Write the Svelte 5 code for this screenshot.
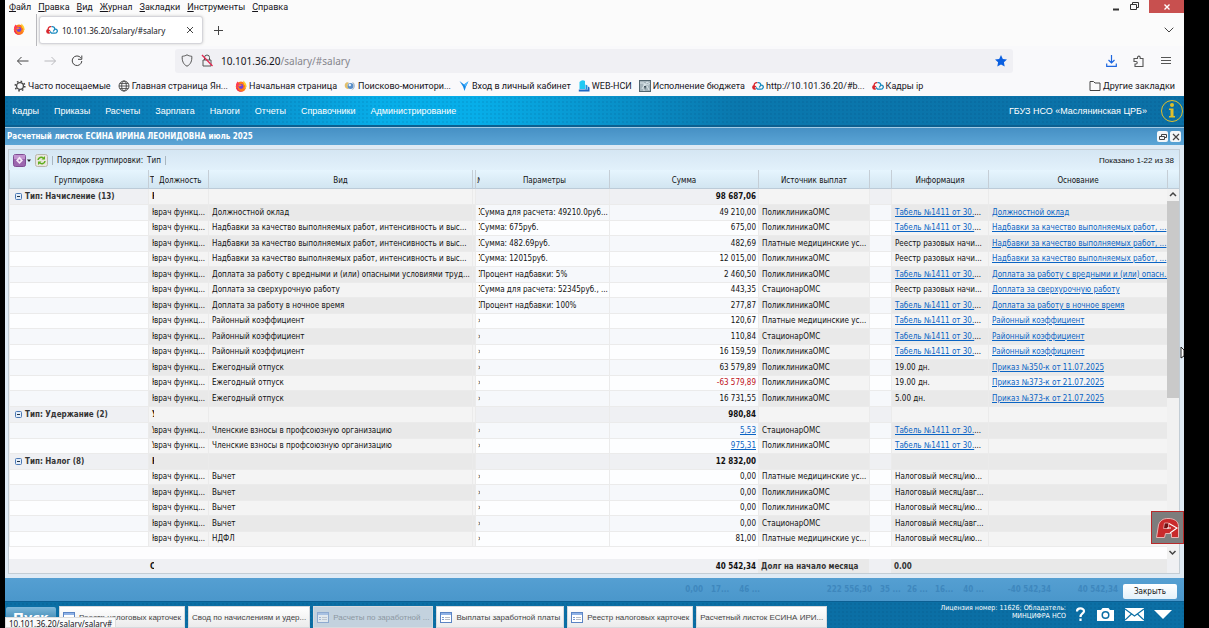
<script>
  const browserMenu = ['Файл', 'Правка', 'Вид', 'Журнал', 'Закладки', 'Инструменты', 'Справка'];
  const bookmarks = [
    ['gear', 'Часто посещаемые'],
    ['globe', 'Главная страница Ян...'],
    ['fox', 'Начальная страница'],
    ['swirl', 'Поисково-монитори...'],
    ['bird', 'Вход в личный кабинет'],
    ['stack', 'WEB-НСИ'],
    ['budget', 'Исполнение бюджета'],
    ['cloud', 'http://10.101.36.20/#b...'],
    ['cloud', 'Кадры ip']
  ];
  const appMenu = ['Кадры', 'Приказы', 'Расчеты', 'Зарплата', 'Налоги', 'Отчеты', 'Справочники', 'Администрирование'];

  const OMS = 'ПоликлиникаОМС';
  const ST = 'СтационарОМС';
  const PAID = 'Платные медицинские ус...';
  const TAB = '*Табель №1411 от 30....';
  const REG = 'Реестр разовых начи...';
  const QUALITY = 'Надбавки за качество выполняемых работ, интенсивность и выс...';
  const QLINK = 'Надбавки за качество выполняемых работ, ...';
  const row = (mark, kind, mark2, params, sum, source, info, reason = '') => ({ mark, kind, mark2, params, sum, source, info, reason });
  const group = (title, mark, sum) => ({ title, mark, sum });
  const rows = [
    group('Тип: Начисление (13)', 'Н', '98 687,06'),
    row('Н', 'Должностной оклад', '1', 'Сумма для расчета: 49210.0руб...', '49 210,00', OMS, TAB, 'Должностной оклад'),
    row('Н', QUALITY, '1', 'Сумма: 675руб.', '675,00', OMS, TAB, QLINK),
    row('Н', QUALITY, '1', 'Сумма: 482.69руб.', '482,69', PAID, REG, QLINK),
    row('Н', QUALITY, '1', 'Сумма: 12015руб.', '12 015,00', OMS, REG, QLINK),
    row('Н', 'Доплата за работу с вредными и (или) опасными условиями труд...', '1', 'Процент надбавки: 5%', '2 460,50', OMS, TAB, 'Доплата за работу с вредными и (или) опасн...'),
    row('Н', 'Доплата за сверхурочную работу', '1', 'Сумма для расчета: 52345руб., ...', '443,35', ST, REG, 'Доплата за сверхурочную работу'),
    row('Н', 'Доплата за работу в ночное время', '1', 'Процент надбавки: 100%', '277,87', OMS, TAB, 'Доплата за работу в ночное время'),
    row('Н', 'Районный коэффициент', '›', '', '120,67', PAID, TAB, 'Районный коэффициент'),
    row('Н', 'Районный коэффициент', '›', '', '110,84', ST, TAB, 'Районный коэффициент'),
    row('Н', 'Районный коэффициент', '›', '', '16 159,59', OMS, TAB, 'Районный коэффициент'),
    row('Н', 'Ежегодный отпуск', '›', '', '63 579,89', OMS, '19.00 дн.', 'Приказ №350-к от 11.07.2025'),
    row('Н', 'Ежегодный отпуск', '›', '', '-63 579,89', OMS, '19.00 дн.', 'Приказ №373-к от 21.07.2025'),
    row('Н', 'Ежегодный отпуск', '›', '', '16 731,55', OMS, '5.00 дн.', 'Приказ №373-к от 21.07.2025'),
    group('Тип: Удержание (2)', 'У', '980,84'),
    row('У', 'Членские взносы в профсоюзную организацию', '›', '', '*5,53', ST, TAB),
    row('У', 'Членские взносы в профсоюзную организацию', '›', '', '*975,31', OMS, TAB),
    group('Тип: Налог (8)', 'Н', '12 832,00'),
    row('Н', 'Вычет', '›', '', '0,00', PAID, 'Налоговый месяц/ию...'),
    row('Н', 'Вычет', '›', '', '0,00', OMS, 'Налоговый месяц/авг...'),
    row('Н', 'Вычет', '›', '', '0,00', OMS, 'Налоговый месяц/ию...'),
    row('Н', 'Вычет', '›', '', '0,00', ST, 'Налоговый месяц/авг...'),
    row('Н', 'НДФЛ', '›', '', '81,00', PAID, 'Налоговый месяц/ию...')
  ];
  const ghosts = [
    ['0,00', 18], ['17...', 18], ['46 ...', 23], ['222 556,30', 104], ['35 ...', 19], ['26 ...', 20], ['16...', 18], ['40 ...', 23], ['-40 542,34', 59], ['40 542,34', 59]
  ];
  const tasks = [
    ['Реестр налоговых карточек', true, false],
    ['Свод по начислениям и удер...', false, false],
    ['Расчеты по заработной ...', true, true],
    ['Выплаты заработной платы', true, false],
    ['Реестр налоговых карточек', true, false],
    ['Расчетный листок ЕСИНА ИРИ...', false, false]
  ];
</script>

{#snippet icon(name)}
  {#if name === 'gear'}
    <svg class="ico" viewBox="0 0 12 12"><circle cx="6" cy="6" r="3.4" fill="none" stroke="#444" stroke-width="1.3" /><circle cx="6" cy="6" r="4.8" fill="none" stroke="#444" stroke-width="1.5" stroke-dasharray="1.6 2.17" /></svg>
  {:else if name === 'globe'}
    <svg class="ico" viewBox="0 0 12 12" fill="none" stroke="#444" stroke-width="0.9"><circle cx="6" cy="6" r="5" /><ellipse cx="6" cy="6" rx="2.3" ry="5" /><path d="M1 6h10M1.8 3.4h8.4M1.8 8.6h8.4" /></svg>
  {:else if name === 'fox'}
    <svg class="ico" viewBox="0 0 12 12"><circle cx="6" cy="6.6" r="5.2" fill="#ff7a1a" /><path d="M8 .6c2.4 1.4 3.6 3.6 3.4 6.2L9 4.500Z" fill="#ffd02e" /><path d="M9.300 3c1.500 2 1.300 4-.3 5.400 2 .2 2.600-1.600 2.200-3Z" fill="#ffc52e" /><path d="M1 4.500C1.500 3 2 2.300 2.600 1.600c.3.8.8 1.300 1.600 1.600L5 5 1.500 8Z" fill="#ff3b55" /><path d="M1 8c1 3 4 4.500 7 3.400-2.500 0-5-1-5.500-4Z" fill="#ee2460" /><circle cx="6" cy="6.500" r="2.400" fill="#7540d8" /><path d="M3.300 5.200c1.400-1 2.800-.6 3.700.4-1.300-.1-1.600.9-2.700 1Z" fill="#ff8d28" /></svg>
  {:else if name === 'cloud'}
    <svg class="ico" viewBox="0 0 12 12" fill="none" stroke-width="1.300"><path d="M3.800 9.200H2.600A2 2 0 0 1 2.200 5.300C2 3.500 3.500 2.300 5.300 2.700M4 6.800a1 1 0 1 0-.5 1.500" stroke="#d9242b" /><path d="M5.500 2.700C7.200 2.200 8.700 3.300 8.800 5.100c2-.3 3 1.400 2.200 2.900-.5.900-1.200 1.200-2.200 1.200H5.500L4 7.500M7.200 7.500 8.800 5.200" stroke="#1789bf" /></svg>
  {:else if name === 'swirl'}
    <svg class="ico" viewBox="0 0 12 12"><path d="M1 4c1-2 3-2 4-1-2 1-2 4 0 6-3 0-5-2-4-5Z" fill="#e3c06b" /><circle cx="6.500" cy="6" r="3" fill="#5b8fc9" /><circle cx="5.800" cy="5" r="1.200" fill="#e9f2fb" /><path d="M8 2c4 1 4 7-1 8.500 3-2 3.500-5 1-8.500Z" fill="#a9b7c4" /></svg>
  {:else if name === 'bird'}
    <svg class="ico" viewBox="0 0 12 12"><path d="M1.500 1 6 4.500 10.500 1.200 8 6.500 6.500 11 5 6.500Z" fill="#1287e6" /><path d="M6 4.500 10.500 1.200 7.500 6.700Z" fill="#50b8ff" /></svg>
  {:else if name === 'stack'}
    <svg class="ico" viewBox="0 0 12 12"><path d="M1.500 2Q4-.8 7 1v8H1.500Z" fill="#1fc9f3" /><path d="M7.500 4.500l2 1v4h-2z" fill="#1a91de" /><path d="M10 6.500l1.500 1v4H.8v-2H10Z" fill="#1c66c4" /></svg>
  {:else if name === 'budget'}
    <svg class="ico" viewBox="0 0 12 12"><rect x=".5" y=".5" width="11" height="11" fill="#a4b3ba" stroke="#53666f" /><path d="M1 3h4l1 2 2-3 3 2M3 9c1-4 5-5 7-4M5 4v7M8 6l2 4" fill="none" stroke="#dce7eb" /><path d="M5 6h2l-1 4Z" fill="#34464e" /></svg>
  {:else if name === 'list'}
    <svg class="list" viewBox="0 0 12 11"><rect x=".5" y=".5" width="11" height="10" fill="#fff" stroke="#5b84c4" /><path d="M1 1h10v2H1z" fill="#8fb2e6" /><path d="M2 5.500h2M2 7.500h2" stroke="#7b9cd0" /><path d="M5 5.500h5M5 7.500h5" stroke="#b8bcc4" /></svg>
  {/if}
{/snippet}

{#snippet linked(text)}
  {#if text.startsWith('*')}
    {#if text.endsWith('....')}<a href="#doc">{text.slice(1, -3)}</a>...{:else}<a href="#doc">{text.slice(1)}</a>{/if}
  {:else}{text}{/if}
{/snippet}

<div class="desktop">
  <div class="window">
    <div class="menubar">
      {#each browserMenu as m}<button><u>{m[0]}</u>{m.slice(1)}</button>{/each}
      <div class="winctl">
        <button aria-label="Свернуть"><svg width="8" height="8"><path d="M1 6.500h6" stroke="#333" stroke-width="2" /></svg></button>
        <button aria-label="Развернуть"><svg width="9" height="9" fill="none" stroke="#333"><path d="M.5 2.500h6v5h-6zM2.500 2V.5h6v5H7" /></svg></button>
        <button class="x" aria-label="Закрыть окно"><svg width="8" height="8"><path d="M1.500 1.500l5 5m0-5l-5 5" stroke="#fff" stroke-width="1.400" /></svg></button>
      </div>
    </div>

    <div class="tabs">
      <span class="pin">{@render icon('fox')}</span>
      <div class="tab">
        {@render icon('cloud')}<span>10.101.36.20/salary/#salary</span>
        <button aria-label="Закрыть вкладку"><svg width="8" height="8"><path d="M1 1l6 6m0-6l-6 6" stroke="#444" /></svg></button>
      </div>
      <button class="plus" aria-label="Новая вкладка"><svg width="9" height="9"><path d="M4.500 0v9M0 4.500h9" stroke="#444" /></svg></button>
      <button class="more" aria-label="Список вкладок"><svg width="10" height="6" fill="none" stroke="#444"><path d="M.7.7 5 5 9.300.7" /></svg></button>
    </div>

    <div class="nav">
      <button aria-label="Назад"><svg width="12" height="10" fill="none" stroke="#444"><path d="M11.500 5h-11M4.500 1l-4 4 4 4" /></svg></button>
      <button aria-label="Вперёд"><svg width="12" height="10" fill="none" stroke="#b9b9bd"><path d="M.5 5h11M7.500 1l4 4-4 4" /></svg></button>
      <button aria-label="Обновить"><svg width="12" height="12" fill="none" stroke="#444"><path d="M9.800 2.800A4.800 4.800 0 1 0 10.800 6M10.800.5v3.800H7" /></svg></button>
      <div class="url">
        <svg width="12" height="13" fill="none" stroke="#555"><path d="M6 .8c1.500 1 3 1.300 4.800 1.500.3 4.200-1 8.200-4.800 9.900C2.200 10.500.9 6.500 1.200 2.300 3 2.100 4.500 1.800 6 .8Z" /></svg>
        <svg width="12" height="13" fill="none" stroke="#555"><path d="M2 6h8v6H2zM3.500 6V3.500a2.500 2.500 0 0 1 5 0V6" /><path d="M1 1l10.500 11" stroke="#e22850" stroke-width="1.300" /></svg>
        <span class="addr">10.101.36.20<i>/salary/#salary</i></span>
        <svg width="12" height="12" fill="#0a5fe0"><path d="M6 0l1.800 3.900 4.200.5-3.100 2.900.8 4.200L6 9.400l-3.700 2.100.8-4.200L0 4.400l4.200-.5Z" /></svg>
      </div>
      <div class="tools">
        <button aria-label="Загрузки"><svg width="11" height="12" fill="none" stroke="#1c66e0" stroke-width="1.200"><path d="M5.500 0v8M2.500 5l3 3 3-3M.7 8.500v2.800h9.600V8.500" /></svg></button>
        <button aria-label="Расширения"><svg width="12" height="12" fill="none" stroke="#555" stroke-width="1.100"><path d="M2 3.500h2.500v-1a1.300 1.300 0 0 1 2.700 0v1H10v8H2V9h1a1.200 1.200 0 0 0 0-2.500H1V3.500Z" /></svg></button>
        <button aria-label="Меню"><svg width="10" height="10"><path d="M0 1.500h10M0 4.500h10M0 7.500h10" stroke="#555" /></svg></button>
      </div>
    </div>

    <div class="bookmarks">
      {#each bookmarks as [i, text]}<a href="#bookmark">{@render icon(i)}{text}</a>{/each}
      <a class="other" href="#bookmark"><svg class="ico" viewBox="0 0 12 12" fill="none" stroke="#444"><path d="M1 10.500v-9h3.500l1.500 1.500h5v7.500Z" /></svg>Другие закладки</a>
    </div>

    <header>
      <nav>{#each appMenu as m}<a href="#menu">{m}</a>{/each}</nav>
      <span class="org">ГБУЗ НСО «Маслянинская ЦРБ»</span>
      <svg width="24" height="24" fill="none" stroke="#e0c02c"><circle cx="12" cy="12" r="10.500" /><circle cx="12" cy="6" r="2" fill="#e0c02c" stroke="none" /><path d="M9 9.500h4.500V17H15v1.500H9V17h1.500v-6H9Z" fill="#e0c02c" stroke="none" /></svg>
    </header>

    <div class="titlebar">
      <h1>Расчетный листок ЕСИНА ИРИНА ЛЕОНИДОВНА июль 2025</h1>
      <button aria-label="Восстановить"><svg width="8" height="8" fill="none" stroke="#444"><path d="M.5 3.500h5v3h-5zM2.500 3V1.500h5v3H6" /></svg></button>
      <button aria-label="Закрыть листок"><svg width="8" height="8"><path d="M1 1l6 6m0-6l-6 6" stroke="#444" stroke-width="1.200" /></svg></button>
    </div>

    <main>
      <div class="panel">
        <div class="toolbar">
          <button class="gem" aria-label="Настройки"><svg width="18" height="13"><rect x=".5" y=".5" width="12" height="12" rx="2" fill="#9c66ae" stroke="#7f4b92" /><path d="M1 1h11v4H1z" fill="#c193cf" /><path d="M6.500 2.500 10 6.500 6.500 10 3 6.500Z" fill="#f4e8f7" /><circle cx="6.500" cy="6.500" r="1" fill="#9c66ae" /><path d="M14 5.500h4L16 8Z" fill="#222" /></svg></button>
          <button aria-label="Обновить таблицу"><svg width="13" height="13"><rect x=".5" y=".5" width="12" height="12" rx="2" fill="#e9e6dd" stroke="#b9b6ac" /><path d="M3 6c.3-2.500 3.500-3.500 5.500-1.800M10 7c-.3 2.500-3.500 3.500-5.500 1.800" fill="none" stroke="#5fae1e" stroke-width="1.500" /><path d="M10 2v3.500H6.500ZM3 11V7.500h3.500Z" fill="#5fae1e" /></svg></button>
          <span class="sep"></span>
          <span>Порядок группировки:</span><button>Тип</button>
          <span class="sep"></span>
          <span class="shown">Показано 1-22 из 38</span>
        </div>

        <table>
          <colgroup><col class="c0" /><col class="c1" /><col class="c2" /><col class="c3" /><col class="c4" /><col class="c5" /><col class="c6" /><col class="c7" /><col class="c8" /><col class="c9" /><col class="c10" /><col /><col class="c12" /></colgroup>
          <thead>
            <tr><th>Группировка</th><th class="clip">Т</th><th class="noline pos">Должность</th><th>Вид</th><th></th><th class="clip">№</th><th class="noline">Параметры</th><th>Сумма</th><th>Источник выплат</th><th></th><th>Информация</th><th>Основание</th><th></th></tr>
          </thead>
          <tbody>
            {#each rows as r, i}
              <tr class:grp={r.title}>
                <td class="b">{#if r.title}<button class="fold"><svg width="7" height="7" fill="none" stroke="#4c79b5"><rect x=".5" y=".5" width="6" height="6" rx="1" fill="#e4eefa" /><path d="M2 3.500h3" stroke="#234" /></svg>{r.title}</button>{/if}</td>
                <td class="clip">{r.mark}</td>
                <td class="noline pos">{r.title ? '' : 'врач функц...'}</td>
                <td>{r.kind ?? ''}</td>
                <td></td>
                <td class="b clip">{r.mark2 ?? ''}</td>
                <td class="b noline par">{r.params ?? ''}</td>
                <td class="b num" class:neg={r.sum.startsWith('-')}>{@render linked(r.sum)}</td>
                <td>{r.source ?? ''}</td>
                <td class="b"></td>
                <td>{@render linked(r.info ?? '')}</td>
                <td class="why">{#if r.reason}<a href="#doc">{r.reason}</a>{/if}</td>
                {#if i === 0}
                  <td class="scroll" rowspan={rows.length}>
                    <div class="track"><svg width="8" height="12" fill="none" stroke="#444" stroke-width="1.500"><path d="M1 7l3-3 3 3" /></svg><span class="thumb"></span></div>
                  </td>
                {/if}
              </tr>
            {/each}
          </tbody>
          <tfoot>
            <tr class="space"><td colspan="12"></td><td class="scroll"><svg width="11" height="11" fill="none" stroke="#444" stroke-width="1.500"><path d="M2.500 4l3 3 3-3" /></svg></td></tr>
            <tr class="total"><td class="b"></td><td class="b clip">С</td><td class="b noline"></td><td class="b"></td><td class="b"></td><td class="b noline"></td><td class="b noline"></td><td class="b num">40 542,34</td><td class="owe">Долг на начало месяца</td><td class="b"></td><td class="owe">0.00</td><td></td><td class="b"></td></tr>
          </tfoot>
        </table>
      </div>
    </main>

    <div class="actions">
      <div class="ghosts">{#each ghosts as [t, w]}<span style="width: {w}px">{t}</span>{/each}</div>
      <button>Закрыть</button>
    </div>

    <footer>
      <button class="start">Пуск</button>
      {#each tasks as [text, hasIcon, dim]}
        <button class="task" class:dim>{#if hasIcon}{@render icon('list')}{/if}<span>{text}</span></button>
      {/each}
      <p>Лицензия номер: 11626; Обладатель:<br />МИНЦИФРА НСО</p>
      <div class="tray">
        <svg width="11" height="15" fill="none" stroke="#fff" stroke-width="2.200"><path d="M2 4.500C2 .5 9 .5 9 4.200 9 6.500 5.500 6.500 5.500 10" /><path d="M5.500 11.500V14" /></svg>
        <svg width="19" height="15"><path d="M1 3h4l1.500-2h6L14 3h4v11H1Z" fill="#fff" /><circle cx="9.500" cy="8" r="4" fill="#0b6fa5" /><circle cx="9.500" cy="8" r="2.500" fill="#fff" /></svg>
        <svg width="19" height="13"><path d="M0 0h19v13H0z" fill="#fff" /><path d="M0 1l9.500 7L19 1M0 12l6.500-6M19 12l-6.500-6" fill="none" stroke="#0b6fa5" stroke-width="1.200" /></svg>
        <svg width="18" height="9"><path d="M0 0h18L9 9Z" fill="#fff" /></svg>
      </div>
    </footer>

    <button class="badge" aria-label="Помощник"><svg width="26" height="24"><path d="M1.500 21.500 3.500 9C5 4.500 8 2.500 13 2.500c6 0 10.500 2.500 10.500 8v11h-7v-4h-6l-1 4Z" fill="#c92a2c" stroke="#e9b4b4" stroke-width="1" /><path d="M9.500 7h4v5.500h-5z" fill="#6d1012" stroke="#f3c4c4" stroke-width=".7" /><path d="M14 7.500l8 4.500-7 5M12 12h4" fill="none" stroke="#fff" stroke-width="1.100" /></svg></button>
    <svg class="cursor" width="4" height="13"><path d="M1 1v11l3-2V4Z" fill="#fff" stroke="#222" /></svg>
    <div class="status">10.101.36.20/salary/salary#</div>
  </div>
</div>

<style>
  :global(body) { margin: 0; background: #000; overflow: hidden; }
  * { box-sizing: border-box; }
  button { border: 0; padding: 0; background: none; font: inherit; color: inherit; display: flex; align-items: center; }
  svg { display: block; flex: none; }
  .desktop { background: #000; padding: 0 25px 0 5px; }
  .window { position: relative; height: 100vh; display: flex; flex-direction: column; overflow: hidden; background: #f9f9fb; color: #15141a; font: 9px Roboto, sans-serif; white-space: nowrap; }
  .ico { width: 12px; height: 12px; }

  .menubar { height: 14px; display: flex; gap: 7px; padding-left: 4px; background: #fbfbfb; }
  .menubar > button { height: 13px; }
  .winctl { margin-left: auto; height: 13px; display: flex; gap: 10px; }
  .x { width: 35px; justify-content: center; background: #c8504f; }

  .tabs { height: 32px; display: flex; align-items: center; background: #fbfbfb; }
  .pin { width: 32px; height: 32px; padding: 9px 8px; border-right: 1px solid #b9b9bd; }
  .tab { width: 164px; height: 28px; margin-left: 2px; padding: 0 8px 0 6px; display: flex; align-items: center; gap: 4px; border: 1px solid #d5d5da; border-radius: 3px; background: #fff; box-shadow: 0 0 3px #ccc; font: 8px "Noto Sans", sans-serif; }
  .tab button { margin-left: auto; }
  .plus { margin-left: 11px; }
  .more { margin: 0 10px 0 auto; }

  .nav { height: 29px; display: flex; align-items: center; gap: 15px; padding: 0 13px 0 12px; }
  .url { flex: 1; height: 24px; margin-left: 77px; padding: 0 6px; display: flex; align-items: center; gap: 8px; border-radius: 3px; background: #f0f0f4; font: 10px "Noto Sans", sans-serif; }
  .addr { flex: 1; }
  .addr i { font-style: normal; color: #85858c; }
  .tools { display: flex; gap: 16px; margin-left: 78px; }

  .bookmarks { height: 21px; display: flex; align-items: center; gap: 7px; padding: 0 9px 0 9px; }
  .bookmarks a { display: flex; align-items: center; gap: 2px; color: inherit; text-decoration: none; }
  .bookmarks .other { margin-left: auto; }

  header { height: 29px; padding: 0 0 0 7px; display: flex; align-items: center; color: #fff; font-family: "Liberation Sans", sans-serif;
    background: radial-gradient(circle, #00306018 1px, transparent 1px) 0 0 / 4px 4px, linear-gradient(90deg, #0a70a6, #0a84bf 16%, #07aee9 32%, #07aee9 40%, #0a78ae 62%, #0b70a6); }
  nav { display: flex; gap: 15px; }
  header a { color: inherit; text-decoration: none; }
  .org { margin: 0 13px 0 auto; }

  .titlebar { height: 20px; padding: 1px 3px 0 2px; display: flex; align-items: center; gap: 2px; border-top: 2px solid #0b5f90; color: #fff; background: linear-gradient(#a3cbe4 1px, #4690c4 1px, #5ba5d6); }
  h1 { margin: 0 auto 0 0; font: bold 8px "DejaVu Sans Condensed", "DejaVu Sans", sans-serif; }
  .titlebar button { width: 11px; height: 11px; justify-content: center; border-radius: 2px; background: #f3f6f8; }

  main { flex: 1; min-height: 0; padding: 4px 4px 4px 3px; background: #dfeaf4; font: 8px "DejaVu Sans Condensed", "DejaVu Sans", sans-serif; color: #111; }
  .panel { height: 100%; border: 1px solid #c3cdd5; overflow: hidden; background: #fff; }
  .toolbar { height: 20px; padding: 0 5px 0 4px; display: flex; align-items: center; gap: 4px; background: linear-gradient(#d5e6f3, #e2f1fb); }
  .sep { width: 1px; height: 9px; background: #a9b6c0; }
  .shown { margin-left: auto; font-family: "Liberation Sans", sans-serif; }

  table { width: 100%; border-collapse: separate; border-spacing: 0; table-layout: fixed; }
  .c0 { width: 139px; } .c1 { width: 6px; } .c2 { width: 54px; } .c3 { width: 264px; } .c4 { width: 3px; } .c5 { width: 5px; }
  .c6 { width: 129px; } .c7 { width: 149px; } .c8 { width: 111px; } .c9 { width: 22px; } .c10 { width: 97px; } .c12 { width: 12px; }
  th { height: 19px; padding: 2px 0 0; font-weight: normal; overflow: hidden; border-left: 1px solid #c5ced6; border-bottom: 1px solid #bccbd8; background: linear-gradient(#e6f5fe, #d2e5f1); }
  td { height: 15px; padding: 0 3px; overflow: hidden; line-height: 12px; background: #f4f4f4; border-left: 1px solid #ebebeb; border-bottom: 1px solid #ebebeb; }
  td.b { background: #fdfeff; }
  tbody tr:nth-child(even) td { height: 16px; background: #e9e9e9; }
  tbody tr:nth-child(even) td.b { background: #f6f8fb; }
  tbody tr.grp td { height: 16px; font-weight: bold; }
  tbody tr.grp td.b { background: #eff0f3; }
  td.clip { padding: 0 0 0 3px; }
  td.b.clip { padding-left: 2px; }
  th.clip { text-align: left; padding-left: 1px; }
  .noline { border-left: 0; }
  td.pos { padding: 0; }
  td.par { padding: 0; }
  td.why { padding-right: 0; }
  th.pos { text-align: left; padding-left: 5px; }
  td.num { text-align: right; padding-right: 2px; }
  .neg { color: #c01020; }
  td a { color: #0a64c4; }
  .fold { gap: 3px; padding-left: 2px; color: #333; }
  .total td.owe { color: #333; }
  tbody tr td.scroll, td.scroll { padding: 0; border: 0; background: #f1f1f1; vertical-align: top; }
  .track { display: flex; flex-direction: column; align-items: center; }
  .thumb { width: 100%; height: 197px; background: #c9c9c9; }
  .space td { height: 12px; border: 0; background: #fdfdfe; }
  .space td.scroll { background: #f1f1f1; }
  .total td { height: 15px; border: 0; font-weight: bold; background: #e9e9e9; }
  .total td.b { background: #eff0f3; }

  .actions { height: 23px; padding: 0 7px 0 0; display: flex; align-items: center; justify-content: flex-end; gap: 5px; background: linear-gradient(#559fd2, #4a97cb); font: 8px "DejaVu Sans Condensed", "DejaVu Sans", sans-serif; }
  .actions button { width: 54px; height: 15px; margin-top: 4px; justify-content: center; border-radius: 2px; background: linear-gradient(#fff, #e3f1fa); color: #111; }
  .ghosts { display: flex; gap: 8px; font-weight: bold; color: #3e87bd; }
  .ghosts span { text-align: right; }

  footer { height: 27px; padding: 0 12px 0 1px; display: flex; align-items: flex-end; gap: 3px; border-top: 1px solid #0a5f93; font: 8px "Liberation Sans", sans-serif;
    background: radial-gradient(circle, #00306018 1px, transparent 1px) 0 0 / 4px 4px, #0b6fa5; }
  .start { width: 50px; height: 21px; justify-content: center; border-radius: 2px 2px 0 0; background: linear-gradient(#7db8da, #1d6d9d); color: #fff; font: bold 13px "DejaVu Sans", sans-serif; }
  .task { height: 22px; padding: 0 3px; gap: 4px; border: 1px solid #d7dade; background: linear-gradient(#fff, #ebebeb); color: #444; }
  .task.dim { background: #c3d2de; color: #8c98a2; }
  .task.dim .list { opacity: 0.5; }
  .list { width: 12px; height: 11px; }
  footer p { margin: 0 0 8px auto; text-align: right; color: #fff; font: 7px/8px "DejaVu Sans Condensed", "DejaVu Sans", sans-serif; }
  .tray { height: 27px; margin-left: 6px; display: flex; align-items: center; gap: 10px; }

  .status { position: absolute; left: 0; bottom: 0; height: 11px; padding: 0 3px; border: 1px solid #ddd; background: #fafafa; font: 8px/12px "Noto Sans", sans-serif; overflow: hidden; }
  .badge { position: absolute; right: 0; bottom: 84px; width: 33px; height: 33px; justify-content: center; border: 1px solid #b92a2a; background: #7d7d7d; }
  .cursor { position: absolute; right: 0; bottom: 269px; }
</style>
